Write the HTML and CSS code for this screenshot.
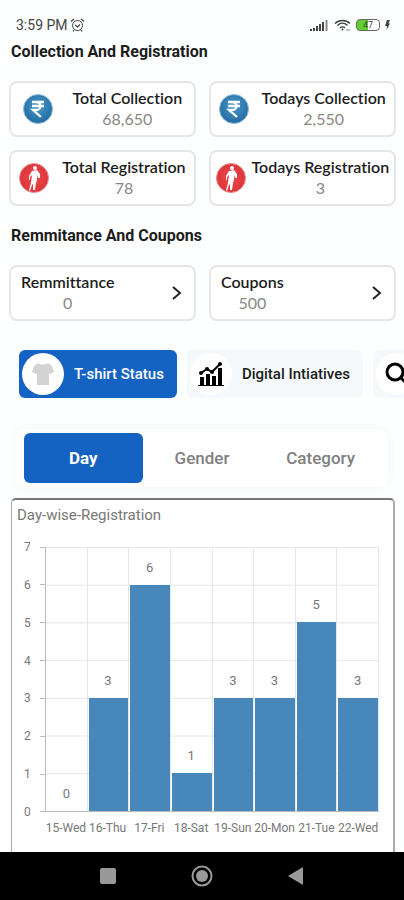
FILE: index.html
```html
<!DOCTYPE html>
<html lang="en">
<head>
    <meta charset="utf-8">
    <meta name="viewport" content="width=device-width, initial-scale=1">
    <title>Registration Dashboard</title>
    <link rel="stylesheet" href="styles.css">
</head>
<body>

<svg width="0" height="0" class="defs" aria-hidden="true">
    <defs>
        <radialGradient id="blue" cx="50%" cy="40%" r="60%">
            <stop offset="0" stop-color="#4a9bcb"/>
            <stop offset="1" stop-color="#23699f"/>
        </radialGradient>
        <radialGradient id="red" cx="50%" cy="50%" r="55%">
            <stop offset="0" stop-color="#f0484a"/>
            <stop offset="1" stop-color="#d8343a"/>
        </radialGradient>
    </defs>
    <symbol id="rupee" viewBox="0 0 30 30">
        <circle cx="15" cy="15" r="14.500" fill="url(#blue)" stroke="#8fbcd8"/>
        <path d="M9 8h12M9 12h12M9 8h4c6 0 6 8 0 8H10l8 7" fill="none" stroke="#fff" stroke-width="2.300"/>
    </symbol>
    <symbol id="runner" viewBox="0 0 30 30">
        <circle cx="15" cy="15" r="14.500" fill="url(#red)" stroke="#ec8d8d"/>
        <circle cx="16" cy="5" r="2" fill="#fff"/>
        <path d="M13 8l5-1 3 4 0 4-2 0-1-3 0 5-1 3-1 7-2 0 0-6-1 1-2 6-1-1 2-7 1-8-2 2 0 3-1 0 0-4z" fill="#fff"/>
    </symbol>
    <symbol id="chevron" viewBox="0 0 10 14">
        <path d="M1 1l7 6-7 6" fill="none" stroke="#222" stroke-width="2"/>
    </symbol>
</svg>

<header class="status">
    <span>3:59 PM</span>
    <svg class="alarm" width="15" height="14" viewBox="0 0 15 14" fill="none" stroke="#444">
        <circle cx="7.5" cy="7.5" r="5"/>
        <path d="M1 3.5L4 1M14 3.5L11 1M5 7l2.500 2 2.500-2.500M4 12l-1 1.500M11 12l1 1.500" stroke-width="1.300"/>
    </svg>
    <span class="status-icons">
        <svg width="19" height="12" viewBox="0 0 19 12" fill="#444">
            <path d="M0 10h2v2H0zM3 9h2v3H3zM6 7h2v5H6zM9 5h2v7H9zM12 3h2v9h-2z"/>
            <path d="M15.500 1h2v11h-2z" fill="#888"/>
        </svg>
        <svg width="17" height="12" viewBox="0 0 17 12" fill="none" stroke="#444" stroke-width="1.500">
            <path d="M1 4.500c4-4 11-4 15 0M3.500 6.500c3-3 7-3 10 0M6 9c1.500-1.500 3.500-1.500 5 0"/>
            <circle cx="8.500" cy="10.500" r="1" fill="#444" stroke="none"/>
            <path d="M12 11h4" stroke="#aaa"/>
        </svg>
        <span class="battery"><span>47</span></span>
        <svg width="5" height="10" viewBox="0 0 5 10" fill="#444">
            <path d="M2 0h3L3.500 3.500H5L1.500 10 2 6H0z"/>
        </svg>
    </span>
</header>

<main>
    <h2>Collection And Registration</h2>
    <section class="cards">
        <div class="card">
            <svg class="round"><use href="#rupee"/></svg>
            <div class="info"><h3>Total Collection</h3><p>68,650</p></div>
        </div>
        <div class="card">
            <svg class="round"><use href="#rupee"/></svg>
            <div class="info"><h3>Todays Collection</h3><p>2,550</p></div>
        </div>
        <div class="card">
            <svg class="round"><use href="#runner"/></svg>
            <div class="info"><h3>Total Registration</h3><p>78</p></div>
        </div>
        <div class="card">
            <svg class="round"><use href="#runner"/></svg>
            <div class="info"><h3>Todays Registration</h3><p>3</p></div>
        </div>
    </section>

    <h2>Remmitance And Coupons</h2>
    <section class="cards">
        <a class="card link" href="#remmittance">
            <div class="info"><h3>Remmittance</h3><p>0</p></div>
            <svg class="chevron"><use href="#chevron"/></svg>
        </a>
        <a class="card link" href="#coupons">
            <div class="info"><h3>Coupons</h3><p>500</p></div>
            <svg class="chevron"><use href="#chevron"/></svg>
        </a>
    </section>

    <nav class="chips">
        <button class="chip active">
            <span class="dot">
                <svg width="22" height="24" viewBox="0 0 22 24">
                    <path d="M6 1c3 2 7 2 10 0l4 3 2 6-4 2-1-1v12H5V11l-1 1-4-2 2-6z" fill="#d3d3d3"/>
                </svg>
            </span>
            T-shirt Status
        </button>
        <button class="chip">
            <span class="dot">
                <svg width="26" height="26" viewBox="0 0 26 26">
                    <path d="M2 16h4v8H2zM8 13h4v11H8zM14 15h4v9h-4zM20 7h4v17h-4zM0 24h26v1H0z"/>
                    <path d="M3 12l6-4 5 3 8-8" fill="none" stroke="#000" stroke-width="2"/>
                    <circle cx="3" cy="12" r="2"/><circle cx="9" cy="8" r="2"/>
                    <circle cx="14" cy="11" r="2"/><circle cx="22" cy="3" r="2"/>
                </svg>
            </span>
            Digital Intiatives
        </button>
        <button class="chip" aria-label="Search">
            <span class="dot">
                <svg width="26" height="26" viewBox="0 0 26 26" fill="none" stroke="#000" stroke-width="3">
                    <circle cx="11" cy="11" r="8"/><path d="M17 17l7 7"/>
                </svg>
            </span>
        </button>
    </nav>

    <div class="tabs">
        <button class="tab active">Day</button>
        <button class="tab">Gender</button>
        <button class="tab">Category</button>
    </div>

    <section class="chart">
        <h4>Day-wise-Registration</h4>
        <div class="graph">
            <div class="y-axis">
                <span>7</span><span>6</span><span>5</span><span>4</span><span>3</span><span>2</span><span>1</span><span>0</span>
            </div>
            <div class="plot">
                <div class="col"><span class="value">0</span><div class="bar" style="height: 0%"></div></div>
                <div class="col"><span class="value">3</span><div class="bar" style="height: 42.86%"></div></div>
                <div class="col"><span class="value">6</span><div class="bar" style="height: 85.71%"></div></div>
                <div class="col"><span class="value">1</span><div class="bar" style="height: 14.29%"></div></div>
                <div class="col"><span class="value">3</span><div class="bar" style="height: 42.86%"></div></div>
                <div class="col"><span class="value">3</span><div class="bar" style="height: 42.86%"></div></div>
                <div class="col"><span class="value">5</span><div class="bar" style="height: 71.43%"></div></div>
                <div class="col"><span class="value">3</span><div class="bar" style="height: 42.86%"></div></div>
            </div>
            <div class="x-axis">
                <span>15-Wed</span><span>16-Thu</span><span>17-Fri</span><span>18-Sat</span><span>19-Sun</span><span>20-Mon</span><span>21-Tue</span><span>22-Wed</span>
            </div>
        </div>
    </section>
</main>

<footer class="navbar">
    <button aria-label="Recent apps">
        <svg width="22" height="22" viewBox="0 0 22 22"><rect x="3" y="3" width="16" height="16" rx="2" fill="#999"/></svg>
    </button>
    <button aria-label="Home">
        <svg width="22" height="22" viewBox="0 0 22 22">
            <circle cx="11" cy="11" r="9.500" fill="none" stroke="#999" stroke-width="2"/>
            <circle cx="11" cy="11" r="6" fill="#999"/>
        </svg>
    </button>
    <button aria-label="Back">
        <svg width="22" height="22" viewBox="0 0 22 22"><path d="M3 11l15-9v18z" fill="#999"/></svg>
    </button>
</footer>

</body>
</html>
```
FILE: styles.css
```css
* {
  box-sizing: border-box;
}

body {
  margin: 0;
  min-height: 100vh;
  display: flex;
  flex-direction: column;
  background: #fdfefe;
  color: #1c1c1c;
  font-family: Roboto, sans-serif;
}

h2, h3, h4, p {
  margin: 0;
}

button {
  border: 0;
  padding: 0;
  background: none;
  font-family: inherit;
}

.defs {
  position: absolute;
}

/* status bar */
.status {
  display: flex;
  align-items: center;
  height: 40px;
  padding: 10px 14px 0 16px;
  font-size: 14px;
  color: #444;
}

.alarm {
  margin-left: 2px;
}

.status-icons {
  display: flex;
  align-items: center;
  gap: 5px;
  margin-left: auto;
}

.battery {
  width: 24px;
  height: 12px;
  border: 1px solid #666;
  border-radius: 4px;
  background: linear-gradient(90deg, #5fd02e 50%, #fff 50%);
  font-size: 9px;
  line-height: 10px;
  text-align: center;
}

main {
  flex: 1;
  display: flex;
  flex-direction: column;
}

h2 {
  padding: 0 11px;
  font-size: 16px;
  line-height: 24px;
  font-weight: 700;
}

/* summary cards */
.cards {
  display: grid;
  grid-template-columns: 1fr 1fr;
  gap: 13px;
  padding: 17px 8px 18px 9px;
}

.card {
  display: flex;
  align-items: center;
  justify-content: space-around;
  height: 56px;
  padding: 0 2px;
  border: 2px solid #e6e6e6;
  border-radius: 8px;
  background: #fff;
  color: inherit;
  text-decoration: none;
  white-space: nowrap;
}

.card.link {
  justify-content: space-between;
  padding: 0 12px 0 10px;
}

.round {
  width: 30px;
  height: 30px;
  flex: none;
}

.chevron {
  width: 10px;
  height: 14px;
}

.info {
  font-family: Lato, sans-serif;
  font-variant-ligatures: none;
  text-align: center;
}

.info h3 {
  font-size: 16px;
  line-height: 20px;
  font-weight: 600;
}

.info p {
  font-size: 16px;
  line-height: 22px;
  color: #888;
}

/* scrolling chips */
.chips {
  display: flex;
  gap: 10px;
  padding: 11px 0 0 19px;
  overflow: hidden;
}

.chip {
  display: flex;
  align-items: center;
  gap: 10px;
  flex: none;
  height: 48px;
  padding: 0 13px 0 3px;
  border-radius: 6px;
  background: #f6f9fb;
  color: #1c1c1c;
  font-size: 15px;
  font-weight: 500;
}

.chip.active {
  background: #1462c2;
  color: #fff;
}

.dot {
  display: flex;
  align-items: center;
  justify-content: center;
  width: 42px;
  height: 42px;
  border-radius: 50%;
  background: #fff;
}

/* day / gender / category */
.tabs {
  display: grid;
  grid-template-columns: 1fr 1fr 1fr;
  margin: 31px 16px 0;
  padding: 4px 8px;
  border-radius: 8px;
  background: #fff;
  box-shadow: 0 0 10px #f3f8f9;
}

.tab {
  height: 50px;
  border-radius: 6px;
  font-size: 17px;
  font-weight: 500;
  color: #808080;
}

.tab.active {
  background: #1462c2;
  color: #fff;
  font-weight: 700;
}

/* bar chart */
.chart {
  flex: 1;
  margin: 11px 9px 0 11px;
  padding: 5px 14px 14px 5px;
  border: solid #aaa;
  border-width: 2px 2px 0 1px;
  border-top-color: #777;
  border-radius: 5px 5px 0 0;
  background: #fff;
}

.chart h4 {
  font-size: 15px;
  line-height: 20px;
  font-weight: 400;
  color: #777;
}

.graph {
  display: grid;
  grid-template-columns: 22px 1fr;
  grid-template-rows: 265px 16px;
  row-gap: 8px;
  margin-top: 22px;
  padding-left: 6px;
  color: #777;
}

.y-axis {
  display: flex;
  flex-direction: column;
  justify-content: space-between;
  margin: -8px 0;
  font-size: 12px;
  line-height: 16px;
}

.y-axis span {
  display: flex;
  align-items: center;
  justify-content: space-between;
  padding-left: 1px;
}

.y-axis span::after {
  content: "";
  width: 5px;
  height: 1px;
  background: #bbb;
}

.plot {
  display: grid;
  grid-template-columns: repeat(8, 1fr);
  border-left: 1px solid #bbb;
  border-bottom: 1px solid #bbb;
  background: linear-gradient(#e6e6e6 1px, transparent 1px) 0 0 / 100% calc(100% / 7);
}

.col {
  display: flex;
  flex-direction: column;
  justify-content: flex-end;
  border-right: 1px solid #e6e6e6;
}

.value {
  margin-bottom: 9px;
  font-size: 13px;
  line-height: 16px;
  text-align: center;
}

.bar {
  flex: none;
  margin-left: 1px;
  background: #4887b9;
}

.x-axis {
  grid-column: 2;
  display: grid;
  grid-template-columns: repeat(8, minmax(0, 1fr));
  font-size: 12px;
  line-height: 16px;
}

.x-axis span {
  display: flex;
  justify-content: center;
  white-space: nowrap;
}

/* android buttons */
.navbar {
  display: flex;
  align-items: center;
  justify-content: center;
  gap: 72px;
  height: 48px;
  background: #000;
}

.navbar button {
  height: 22px;
}
```
